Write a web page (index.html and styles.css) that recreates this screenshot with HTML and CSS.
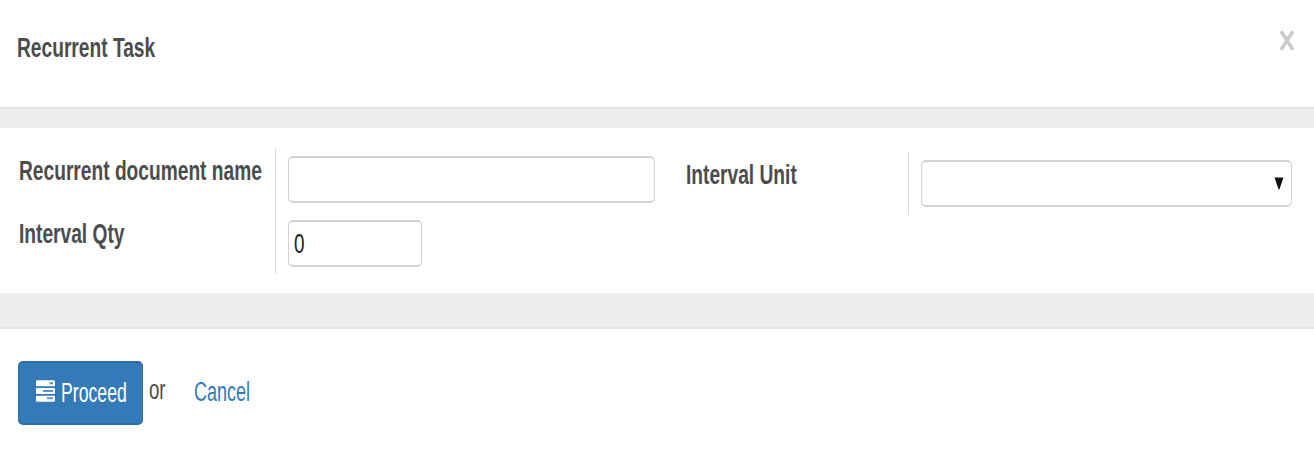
FILE: index.html
```html
<!DOCTYPE html>
<html lang="en">
<head>
<meta charset="utf-8">
<title>Recurrent Task</title>
<link rel="stylesheet" href="styles.css">
</head>
<body>
<div class="dialog">
  <header class="header">
    <h1 class="title"><span class="bold">Recurrent Task</span></h1>
    <button class="close" aria-label="Close"><svg width="16" height="22" viewBox="0 0 16 22"><path d="M2 1.3 14 19.7M14 1.3 2 19.7" stroke="#c9c9c9" stroke-width="3.4"/></svg></button>
  </header>
  <main class="body">
    <div class="group group-main">
      <div class="labels">
        <label class="label" for="name"><span class="bold">Recurrent document name</span></label>
        <label class="label" for="qty"><span class="bold">Interval Qty</span></label>
      </div>
      <div class="fields">
        <div class="field" id="name"></div>
        <div class="field field-small" id="qty"><span class="value">0</span></div>
      </div>
    </div>
    <div class="group group-unit">
      <div class="labels">
        <label class="label" for="unit"><span class="bold">Interval Unit</span></label>
      </div>
      <div class="fields">
        <div class="field field-select" id="unit"><svg width="10" height="13" viewBox="0 0 10 13"><path d="M.5.5h9L5.4 12.5h-.8z" fill="#111"/></svg></div>
      </div>
    </div>
  </main>
  <footer class="footer">
    <button class="proceed">
      <svg class="tasks" width="19" height="22" viewBox="0 0 19 22">
        <g fill="#fff"><rect y=".3" width="19" height="6" rx="1"/><rect y="8" width="19" height="6" rx="1"/><rect y="15.7" width="19" height="6" rx="1"/></g>
        <path d="M13.5 3.3h3.5M7 11h10M11 18.2H17" stroke="#5b94c7" stroke-width="2"/>
      </svg>
      <span class="regular">Proceed</span>
    </button>
    <span class="or"><span class="regular">or</span></span>
    <a class="cancel"><span class="regular">Cancel</span></a>
  </footer>
</div>
</body>
</html>
```
FILE: styles.css
```css
* { box-sizing: border-box; }
body {
  margin: 0;
  background: #fff;
  color: #4c4c4c;
  font: 27px/32px "Liberation Sans", Arial, sans-serif;
}
.dialog {
  display: flex;
  flex-direction: column;
  height: 452px;
  overflow: hidden;
  background: #efedee;
}
button { margin: 0; padding: 0; border: 0; background: none; font: inherit; }
.header {
  display: flex;
  justify-content: space-between;
  height: 109px;
  padding: 32px 19px 0 17px;
  background: #fff;
  border-bottom: 2px solid #e5e5e5;
}
.title { margin: 0; font-size: 27px; }
.close { width: 16px; height: 22px; margin-top: -2px; }
svg { display: block; flex: none; }
.bold, .regular, .value {
  display: inline-block;
  white-space: nowrap;
  transform-origin: 0 50%;
}
.bold { font-weight: bold; transform: scaleX(.71); }
.regular { transform: scaleX(.665); }
.value { color: #222; transform: scaleX(.7); }
.body {
  display: flex;
  height: 165px;
  margin-top: 19px;
  padding: 20px 22px 0 19px;
  background: #fff;
}
.group { display: flex; }
.group-main { width: 667px; height: 126px; }
.group-unit { width: 606px; height: 63px; margin-top: 4px; }
.labels {
  display: flex;
  flex: none;
  flex-direction: column;
  gap: 31px;
  width: 257px;
  padding-top: 7px;
  border-right: 1px solid #d9d9d9;
}
.group-unit .labels { width: 223px; }
.label { display: block; height: 32px; }
.fields {
  display: flex;
  flex-direction: column;
  gap: 17px;
  padding: 8px 0 0 12px;
}
.field {
  width: 367px;
  height: 47px;
  border: 2px solid #d2d2d2;
  border-width: 2px 1px;
  border-radius: 5px;
  background: #fff;
}
.field-small { width: 134px; padding: 6px 5px; }
.field-select {
  display: flex;
  align-items: center;
  justify-content: flex-end;
  width: 371px;
  padding-right: 7px;
}
.footer {
  display: flex;
  height: 125px;
  margin-top: 34px;
  padding: 32px 18px;
  background: #fff;
  border-top: 2px solid #e5e5e5;
}
.proceed {
  display: flex;
  align-items: center;
  width: 125px;
  height: 64px;
  padding-left: 17px;
  gap: 6px;
  color: #fff;
  background: #337ab7;
  border: 2px solid #2e6da4;
  border-width: 2px 1px;
  border-radius: 5px;
}
.proceed .regular { transform: scaleX(.655); }
.tasks { margin-top: -4px; }
.or { width: 46px; margin-left: 6px; padding-top: 13px; }
.or .regular { transform: scaleX(.69); }
.cancel { margin-left: -1px; padding-top: 15px; color: #337ab7; }
```
